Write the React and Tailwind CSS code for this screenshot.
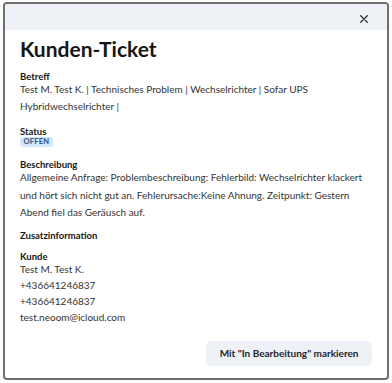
const KUNDE = ['Test M. Test K.', '+436641246837', '+436641246837', 'test.neoom@icloud.com'];

function Label({ children, className = '' }) {
  return <p className={`text-[9.5px] font-bold leading-[9px] text-[#161616] ${className}`}>{children}</p>;
}

export default function App() {
  return (
    <div className="w-[392px] h-[383px] bg-[#fbfbfb] pt-[2px] pl-[3px] pr-[3px] pb-[3px] font-['Lato',sans-serif]">
      <div className="h-full flex flex-col border-2 border-[#6f6f6f] rounded-[4px] bg-white overflow-hidden">
        {/* Header */}
        <div className="h-[26px] shrink-0 bg-[#eef2f6] flex items-center justify-end pr-[19px]">
          <svg width="8" height="8" viewBox="0 0 8 8" className="mt-[3px]">
            <path d="M0.7 0.7 L7.3 7.3 M7.3 0.7 L0.7 7.3" stroke="#333" strokeWidth="1.3" strokeLinecap="round" />
          </svg>
        </div>

        <div className="flex-1 flex flex-col px-[15px] pt-[5px]">
          <h1 className="text-[21px] font-bold leading-[28px] text-[#161616]">Kunden-Ticket</h1>

          <Label className="mt-[9px]">Betreff</Label>
          <p className="text-[10px] leading-[17px] text-[#333]">
            Test M. Test K. | Technisches Problem | Wechselrichter | Sofar UPS Hybridwechselrichter |
          </p>

          <Label className="mt-[12px]">Status</Label>
          <div className="flex mt-[1px]">
            <span className="px-[3.5px] rounded-[3px] bg-[#d3e6fa] text-[7.5px] font-black leading-[10px] tracking-[0.2px] text-[#3a5f8c]">OFFEN</span>
          </div>

          <Label className="mt-[13px]">Beschreibung</Label>
          <p className="text-[10px] leading-[17.5px] text-[#333]">
            Allgemeine Anfrage: Problembeschreibung: Fehlerbild: Wechselrichter klackert und hört sich nicht gut an. Fehlerursache:Keine Ahnung. Zeitpunkt: Gestern Abend fiel das Geräusch auf.
          </p>

          <Label className="mt-[9px]">Zusatzinformation</Label>

          <Label className="mt-[12px]">Kunde</Label>
          <div>
            {KUNDE.map((l, i) => (
              <p key={i} className="text-[10px] leading-[16.3px] text-[#333]">{l}</p>
            ))}
          </div>

          <div className="flex justify-end mt-[15px]">
            <button className="h-[25px] px-[13.5px] rounded-[5px] bg-[#eef1f5] text-[10px] font-bold leading-none text-[#1f2530]">
              Mit "In Bearbeitung" markieren
            </button>
          </div>
        </div>
      </div>
    </div>
  );
}
